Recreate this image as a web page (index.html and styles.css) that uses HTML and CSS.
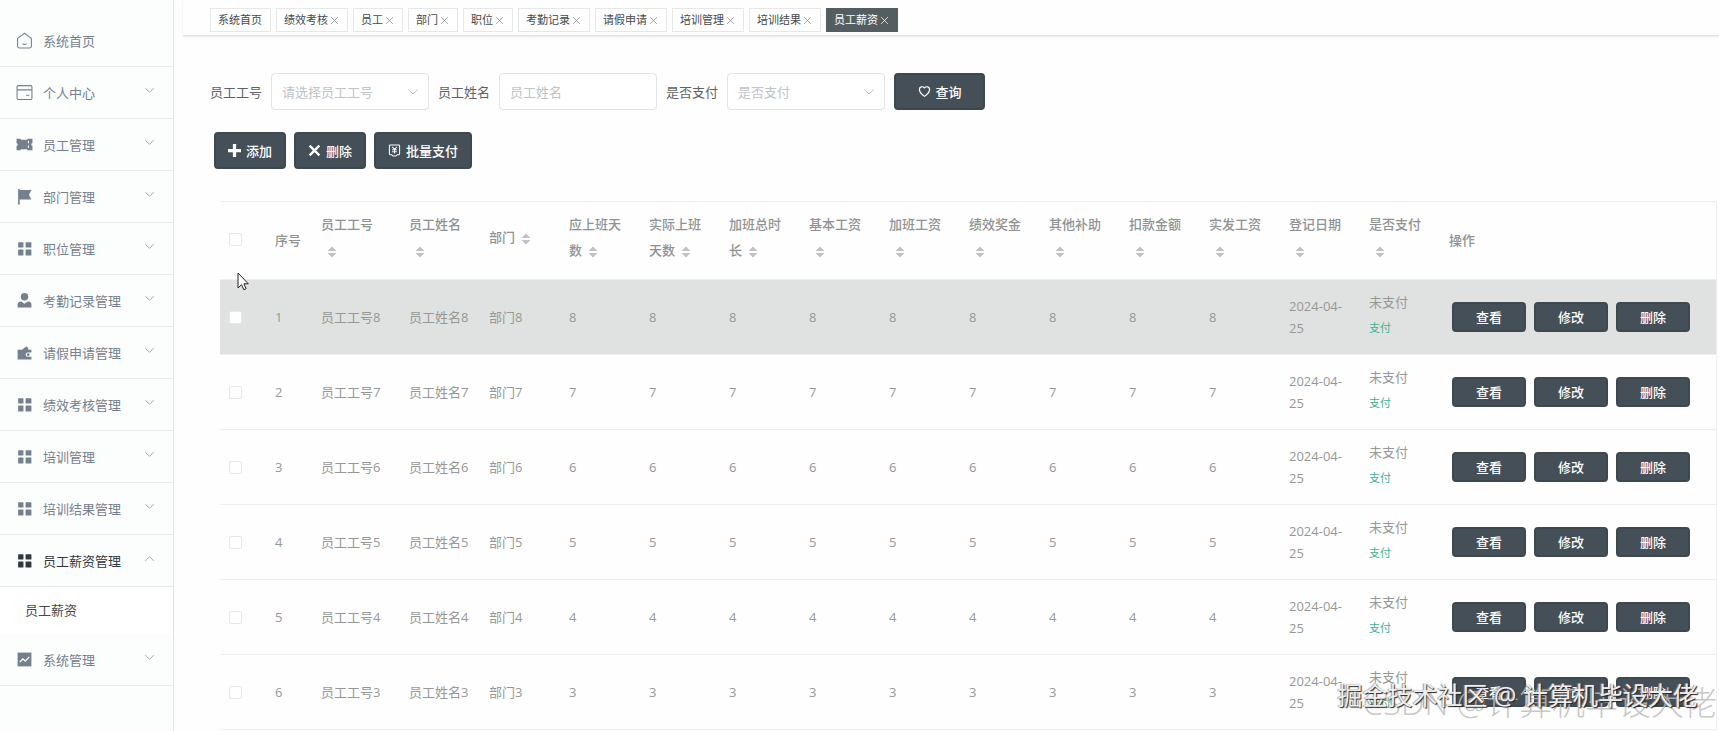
FILE: index.html
```html
<!DOCTYPE html>
<html lang="zh-CN">
<head>
<meta charset="utf-8">
<title>员工薪资</title>
<link rel="stylesheet" href="styles.css">
</head>
<body>
<svg class="defs" aria-hidden="true">
  <symbol id="home" viewBox="0 0 16 16"><path d="M1.500 6 8 1.200 14.500 6v7.500q0 1.500-1.500 1.500H3q-1.500 0-1.500-1.500ZM6 11q2 1.500 4 0" fill="none" stroke="currentColor" stroke-linejoin="round"/></symbol>
  <symbol id="card" viewBox="0 0 16 16"><path d="M2 1.500h12q1 0 1 1v11q0 1-1 1H2q-1 0-1-1v-11q0-1 1-1ZM1 5.500h14M9.500 10.500h3" fill="none" stroke="currentColor"/></symbol>
  <symbol id="ticket" viewBox="0 0 16 16"><path fill="currentColor" fill-rule="evenodd" d="M.5 2.500h3.500l.8 1h5.500l.8-1h4.400v4.300a1.200 1.200 0 0 0 0 2.400v4.300h-4.400l-.8-1H4.800l-.8 1H.5V9.200a1.200 1.200 0 0 0 0-2.400ZM11.200 4.500v2.300h1V4.500Zm0 4.500v2.300h1V9Z"/></symbol>
  <symbol id="flag" viewBox="0 0 16 16"><path fill="currentColor" d="M2 1h1.500v.8h11l-2.300 4.500 2.300 4.500h-11V15.500H2Z"/></symbol>
  <symbol id="grid" viewBox="0 0 16 16"><path fill="currentColor" d="M2.500 2h4q.5 0 .5.500v4q0 .5-.5.500h-4q-.5 0-.5-.5v-4q0-.5.5-.5Zm7 0h4.500q.5 0 .5.500v4q0 .5-.5.500H9.500Q9 7 9 6.500v-4Q9 2 9.500 2Zm-7 7h4q.5 0 .5.500V14q0 .5-.5.500h-4Q2 14.500 2 14V9.500Q2 9 2.500 9Zm7 0h4.500q.5 0 .5.500V14q0 .5-.5.500H9.500Q9 14.500 9 14V9.500Q9 9 9.500 9Z"/></symbol>
  <symbol id="user" viewBox="0 0 16 16"><circle cx="8" cy="4.500" r="3.500" fill="currentColor"/><path fill="currentColor" d="M1.500 14.500V12q0-3 3.500-3l3 2 3-2q3.500 0 3.500 3v2.500Z"/></symbol>
  <symbol id="wallet" viewBox="0 0 16 16"><path fill="currentColor" d="M1.500 5.500h4l4.500-3.500 1.500 2v1.500h3V8H11a2 2 0 0 0 0 4h3.500v2.500h-13Z"/><circle cx="11.500" cy="10" r="1.200" fill="currentColor"/></symbol>
  <symbol id="chart" viewBox="0 0 16 16"><path fill="currentColor" d="M1.500 1.500h13v13h-13Z"/><path d="m3.500 10.500 3-3 2.300 2 3.700-4" fill="none" stroke="#fff" stroke-width="1.200"/></symbol>
  <symbol id="down" viewBox="0 0 12 12"><path d="m1.500 3.500 4.500 4.500 4.500-4.500" fill="none" stroke="currentColor"/></symbol>
  <symbol id="x" viewBox="0 0 12 12"><path d="m1.500 1.500 9 9m0-9-9 9" fill="none" stroke="currentColor"/></symbol>
  <symbol id="heart" viewBox="0 0 16 16"><path d="M8 14C4.500 11.500 1.700 8.500 1.700 5.500 1.700 1.800 6 1.300 8 3.500c2-2.200 6.300-1.700 6.300 2C14.300 8.500 11.500 11.500 8 14Z" fill="none" stroke="currentColor" stroke-width="1.500"/></symbol>
  <symbol id="plus" viewBox="0 0 12 12"><path d="M6 0v12M0 6h12" stroke="currentColor" stroke-width="3"/></symbol>
  <symbol id="cross" viewBox="0 0 12 12"><path d="m1.500 1.500 9 9m0-9-9 9" stroke="currentColor" stroke-width="2.200"/></symbol>
  <symbol id="yen" viewBox="0 0 14 14"><path d="M2.500 1h9q1 0 1 1v8.500q0 1-1 1H10L8.500 13h-3L4 11.500H2.500q-1 0-1-1V2q0-1 1-1ZM4.500 3.200 7 5.800l2.500-2.600M7 5.800v4.400M4.500 6.200h5M4.500 8.300h5" fill="none" stroke="currentColor" stroke-width="1.100"/></symbol>
  <symbol id="sort" viewBox="0 0 10 12"><path fill="#c0c2c4" d="M5 .5 9.500 5h-9Zm0 11L9.500 7h-9Z"/></symbol>
</svg>
<div class="app">
  <nav class="sidebar" id="sidebar"></nav>
  <div class="content">
    <div class="tabs" id="tabs"></div>
    <main class="page">
      <form class="filters">
        <div class="field"><label for="no">员工工号</label><span class="select"><select id="no"><option>请选择员工工号</option></select><svg><use href="#down"/></svg></span></div>
        <div class="field"><label for="name">员工姓名</label><input class="text" id="name" type="text" placeholder="员工姓名"></div>
        <div class="field"><label for="paid">是否支付</label><span class="select"><select id="paid"><option>是否支付</option></select><svg><use href="#down"/></svg></span></div>
        <button class="btn search" type="button"><svg><use href="#heart"/></svg>查询</button>
      </form>
      <div class="actions">
        <button class="btn" type="button"><svg><use href="#plus"/></svg>添加</button>
        <button class="btn" type="button"><svg><use href="#cross"/></svg>删除</button>
        <button class="btn" type="button"><svg><use href="#yen"/></svg>批量支付</button>
      </div>
      <table class="grid">
        <colgroup id="cols"></colgroup>
        <thead><tr id="head"></tr></thead>
        <tbody id="rows"></tbody>
      </table>
    </main>
  </div>
</div>
<div class="mark mark-back">CSDN @计算机毕设大佬</div>
<div class="mark mark-front">掘金技术社区 @ 计算机毕设大佬</div>
<svg class="cursor" viewBox="0 0 12 19"><path d="M1 1v15l3.500-3.300 2.300 5 2.300-1-2.200-4.900h4.400Z" fill="#fff" stroke="#222"/></svg>
<script src="app.js"></script>
</body>
</html>
```
FILE: styles.css
```css
* { box-sizing: border-box; }
body {
  margin: 0;
  height: 100vh;
  overflow: hidden;
  background: #fefefe;
  color: #606266;
  font: 13px/22px "Open Sans", "Noto Sans CJK SC", sans-serif;
}
button, input, select { font: inherit; }
.defs { position: absolute; width: 0; height: 0; }
.app { display: flex; height: 100vh; }

.sidebar {
  flex: none;
  width: 174px;
  padding-top: 15px;
  background: #fcfdfd;
  border-right: 1px solid #dde3e6;
}
.item {
  display: flex;
  align-items: center;
  width: 100%;
  height: 52px;
  padding: 0 18px 0 16px;
  border: 0;
  border-bottom: 1px solid #e8ebed;
  background: none;
  color: #75808c;
  text-align: left;
}
.item .icon { width: 17px; height: 17px; margin-right: 10px; }
.item .arrow { width: 11px; height: 11px; margin: 0 0 4px auto; color: #9aa0a6; }
.item.open { color: #2f383b; }
.item.open .arrow { transform: rotate(180deg); }
.sub {
  display: block;
  height: 47px;
  padding-left: 25px;
  background: #fff;
  color: #45494c;
  line-height: 47px;
  text-decoration: none;
}

.content { flex: 1; min-width: 0; padding-left: 9px; }
.tabs {
  display: flex;
  gap: 5px;
  height: 36px;
  padding: 8px 27px 3px;
  border-bottom: 1px solid #e2e4e5;
  box-shadow: 0 1px 2px #e8eaea;
}
.tab {
  display: flex;
  align-items: center;
  gap: 2px;
  height: 24px;
  padding: 0 8px 0 7px;
  border: 1px solid #e6e8e8;
  background: #fff;
  color: #45494c;
  font-size: 11px;
  line-height: 22px;
}
.tab svg { width: 9px; height: 9px; color: #85898b; }
.tab.active { background: #545e61; border-color: #545e61; color: #fff; }
.tab.active svg { color: #fff; }

.page { padding: 37px 2px 0 27px; }
.filters { display: flex; gap: 9px; }
.field { display: flex; align-items: center; gap: 9px; }
.select { display: grid; align-items: center; }
.select > * { grid-area: 1 / 1; }
.select svg { width: 12px; height: 12px; margin-right: 10px; justify-self: end; color: #c0c4cc; pointer-events: none; }
.text, select {
  width: 158px;
  height: 37px;
  padding: 0 10px;
  border: 1px solid #e1e3e5;
  border-radius: 4px;
  background: #fff;
  color: #c0c3c7;
  appearance: none;
}
.text::placeholder { color: #c0c3c7; }
.btn {
  display: flex;
  align-items: center;
  justify-content: center;
  gap: 5px;
  height: 37px;
  padding: 0 12px;
  border: 2px solid #3e484f;
  border-radius: 4px;
  background: #454f57;
  color: #fff;
  font-weight: 500;
}
.btn svg { width: 13px; height: 13px; }
.search { width: 91px; }
.actions { display: flex; gap: 8px; padding: 22px 4px 32px; }

.grid {
  width: calc(100% - 10px);
  margin-left: 10px;
  table-layout: fixed;
  border-collapse: separate;
  border-spacing: 0;
  border-top: 1px solid #eff0f0;
  border-right: 1px solid #eff0f0;
  color: #969896;
}
.c-46 { width: 46px; }
.c-88 { width: 88px; }
.c-80 { width: 80px; }
th {
  height: 78px;
  padding: 0 9px 2px;
  border-bottom: 1px solid #eff0f0;
  color: #8f9292;
  font-weight: 500;
  line-height: 26px;
  text-align: left;
}
.sortable { padding-bottom: 7px; }
td { height: 75px; padding: 0 9px; border-bottom: 1px solid #eff0f0; }
.hover td { background: #e0e2e1; }
.sort { display: inline-flex; justify-content: center; width: 22px; vertical-align: middle; }
.sort svg { width: 10px; height: 12px; }
.check {
  display: block;
  width: 13px;
  height: 13px;
  margin: 0;
  border: 1px solid #e6e8e9;
  border-radius: 2px;
  background: #fff;
  appearance: none;
}
.state { display: block; line-height: 26px; }
.pay { display: block; margin-bottom: 4px; color: #3db295; font-size: 11px; line-height: 26px; text-decoration: none; }
.ops { display: flex; gap: 8px; padding-left: 3px; }
.ops .btn { width: 74px; height: 30px; padding: 0; }

.mark { position: absolute; white-space: nowrap; }
.mark-back { right: 2px; bottom: 4px; color: rgba(190, 190, 190, .85); font-size: 33px; font-weight: 300; line-height: 48px; }
.mark-front { right: 21px; bottom: 18px; color: #eee; font-size: 25px; line-height: 36px; text-shadow: 1px 1px 1px #222, -1px 0 1px #999; }
.cursor { position: absolute; left: 237px; top: 272px; width: 12px; height: 19px; }
```
FILE: app.js
```js
const icon = (id, cls = '') => `<svg class="${cls}"><use href="#${id}"/></svg>`;
const byId = id => document.getElementById(id);

const menu = [
  ['home', '系统首页'], ['card', '个人中心'], ['ticket', '员工管理'], ['flag', '部门管理'],
  ['grid', '职位管理'], ['user', '考勤记录管理'], ['wallet', '请假申请管理'], ['grid', '绩效考核管理'],
  ['grid', '培训管理'], ['grid', '培训结果管理'], ['grid', '员工薪资管理', '员工薪资'], ['chart', '系统管理']
];
byId('sidebar').innerHTML = menu.map(([name, label, sub], i) =>
  `<button type="button" class="item${sub ? ' open' : ''}">${icon(name, 'icon')}${label}${i ? icon('down', 'arrow') : ''}</button>` +
  (sub ? `<a class="sub" href="#">${sub}</a>` : '')).join('');

const tabs = ['系统首页', '绩效考核', '员工', '部门', '职位', '考勤记录', '请假申请', '培训管理', '培训结果', '员工薪资'];
byId('tabs').innerHTML = tabs.map((t, i) =>
  `<button type="button" class="tab${i === tabs.length - 1 ? ' active' : ''}">${t}${i ? icon('x') : ''}</button>`).join('');

const amounts = ['应上班天数', '实际上班天数', '加班总时长', '基本工资', '加班工资', '绩效奖金', '其他补助', '扣款金额', '实发工资'];
const sortable = ['员工工号', '员工姓名', '部门', ...amounts, '登记日期', '是否支付'];
const check = label => `<input class="check" type="checkbox" aria-label="${label}">`;

byId('cols').innerHTML = '<col class="c-46"><col class="c-46"><col class="c-88">' + '<col class="c-80">'.repeat(13) + '<col>';
byId('head').innerHTML = `<th>${check('全选')}</th><th>序号</th>` +
  sortable.map(t => `<th class="sortable">${t}<span class="sort">${icon('sort')}</span></th>`).join('') + '<th>操作</th>';
byId('rows').innerHTML = [8, 7, 6, 5, 4, 3].map((n, i) =>
  `<tr${i ? '' : ' class="hover"'}><td>${check('选择' + (i + 1))}</td><td>${i + 1}</td><td>员工工号${n}</td><td>员工姓名${n}</td><td>部门${n}</td>` +
  `<td>${n}</td>`.repeat(amounts.length) +
  `<td>2024-04-25</td><td><span class="state">未支付</span><a class="pay" href="#">支付</a></td>` +
  `<td><div class="ops">${['查看', '修改', '删除'].map(t => `<button type="button" class="btn">${t}</button>`).join('')}</div></td></tr>`).join('');
```
